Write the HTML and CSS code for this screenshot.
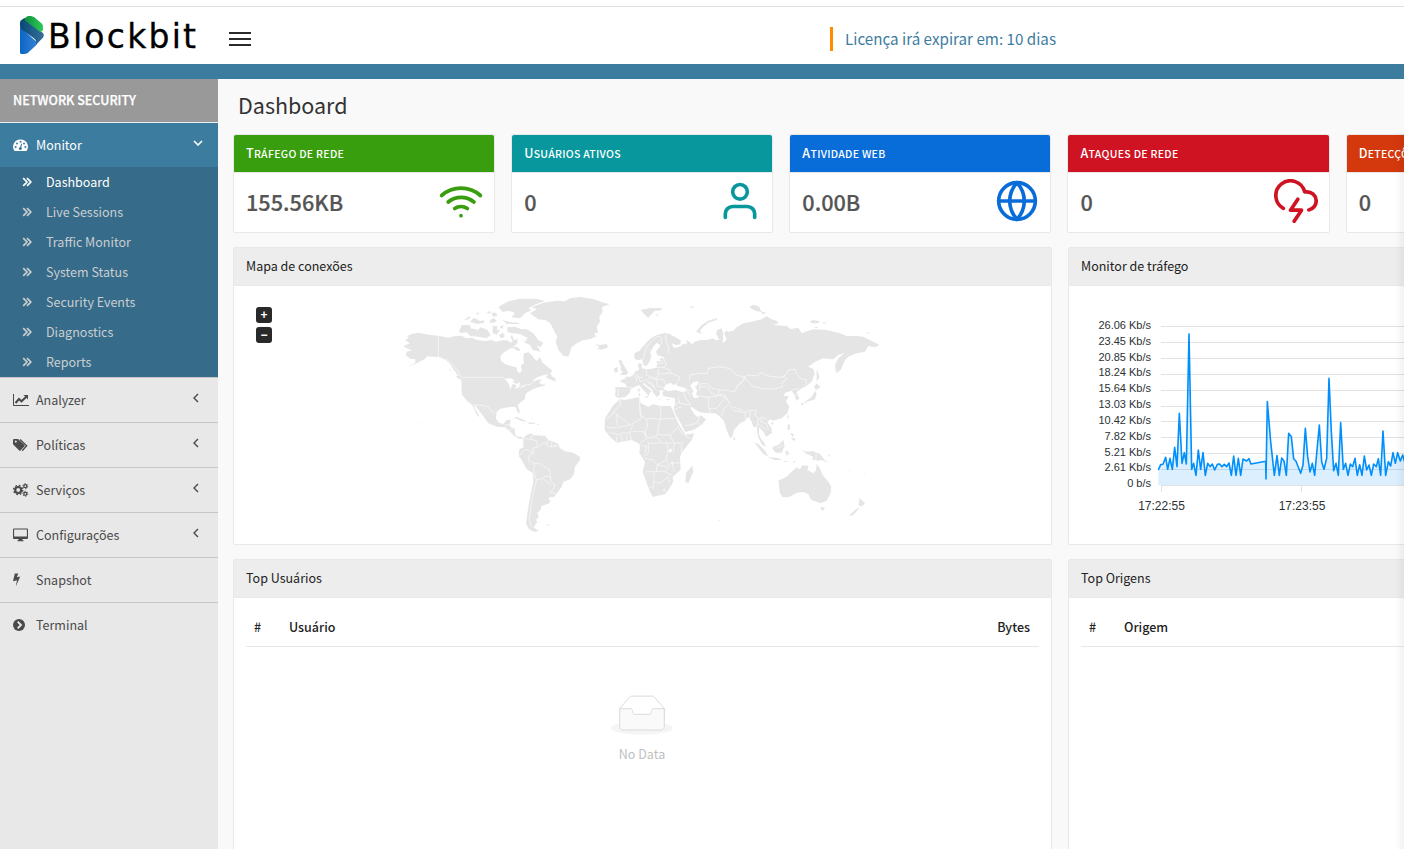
FILE: index.html
```html
<!DOCTYPE html>
<html lang="pt-BR">
<head>
<meta charset="utf-8">
<title>Blockbit</title>
<link rel="stylesheet" href="styles.css">
</head>
<body>
<svg class="defs" width="0" height="0" aria-hidden="true">
  <symbol id="raquo" viewBox="0 0 10 10"><path d="M1.200 1.200L5 5 1.200 8.800M5 1.200L8.800 5 5 8.800" fill="none" stroke="currentColor" stroke-width="1.700"/></symbol>
  <symbol id="left" viewBox="0 0 6 10"><path d="M5 1L1 5l4 4" fill="none" stroke="currentColor" stroke-width="1.400"/></symbol>
</svg>
<header class="top">
  <div class="brand">
    <svg class="mark" viewBox="0 0 72 114">
      <defs>
        <linearGradient id="g1"><stop offset="0" stop-color="#0d8e3c"/><stop offset="1" stop-color="#2fc95a"/></linearGradient>
        <linearGradient id="g2"><stop offset="0" stop-color="#074674"/><stop offset="1" stop-color="#36719c"/></linearGradient>
        <linearGradient id="g3"><stop offset="0" stop-color="#0b66c4"/><stop offset="1" stop-color="#3580d6"/></linearGradient>
      </defs>
      <path fill="url(#g3)" d="M0 32L50 78V86L24 110Q19 114 12 114H4Q0 114 0 109Z"/>
      <path fill="url(#g2)" d="M0 20Q0 14 5 11L14 6 68 50Q75 57 68 66L48 86V76Q47 71 42 67L7 42Q0 37 0 30Z"/>
      <path fill="url(#g1)" d="M13 8L22 1Q27-1 33 0L42 3 66 23Q70 28 69 34V42L62 49 18 16Q14 12 13 8Z"/>
    </svg>
    <span class="word">Blockbit</span>
  </div>
  <div class="burger"><i></i><i></i><i></i></div>
  <div class="notice">Licença irá expirar em: 10 dias</div>
</header>
<div class="strip"></div>
<div class="shell">
  <nav class="side">
    <div class="side-title">NETWORK SECURITY</div>
    <div class="item active">
      <svg class="ico" viewBox="0 0 16 14"><path fill="currentColor" d="M7.500 1.500a7.200 7.200 0 0 0-6.200 11.200q.2.300.6.300h11.200q.4 0 .6-.3A7.200 7.200 0 0 0 7.500 1.500z"/><g fill="#3c7c9f"><circle cx="2.600" cy="9" r="1"/><circle cx="4" cy="5.400" r="1"/><circle cx="7.500" cy="3.800" r="1"/><circle cx="11" cy="5.400" r="1"/><circle cx="12.400" cy="9" r="1"/><circle cx="7.300" cy="10.500" r="1.500"/><path d="M6.800 9.800L8.300 5.500l.8.300-1 4.500z"/></g></svg>
      <span>Monitor</span>
      <svg class="chev down" viewBox="0 0 10 6"><path d="M1 1l4 4 4-4" fill="none" stroke="currentColor" stroke-width="1.600"/></svg>
    </div>
    <ul class="sub">
      <li class="on"><svg><use href="#raquo"/></svg>Dashboard</li>
      <li><svg><use href="#raquo"/></svg>Live Sessions</li>
      <li><svg><use href="#raquo"/></svg>Traffic Monitor</li>
      <li><svg><use href="#raquo"/></svg>System Status</li>
      <li><svg><use href="#raquo"/></svg>Security Events</li>
      <li><svg><use href="#raquo"/></svg>Diagnostics</li>
      <li><svg><use href="#raquo"/></svg>Reports</li>
    </ul>
    <div class="item">
      <svg class="ico" viewBox="0 0 16 14"><path d="M.5 1v11.500H16" fill="none" stroke="currentColor"/><path d="M2.500 10l3.500-4 2.500 2.300L13 4" fill="none" stroke="currentColor" stroke-width="2"/><path d="M10.500 2H15v4.500z" fill="currentColor"/></svg>
      <span>Analyzer</span><svg class="chev"><use href="#left"/></svg>
    </div>
    <div class="item">
      <svg class="ico" viewBox="0 0 16 14"><path fill="currentColor" fill-rule="evenodd" d="M0 2q0-1 1-1h4l6.500 6q.6.600 0 1.200l-4 4.300q-.7.600-1.300 0L0 6.200zm2.800.5a1 1 0 1 0 .01 0z"/><path d="M7 1.500l6.700 6.200-4.500 5" fill="none" stroke="currentColor" stroke-width="1.300"/></svg>
      <span>Políticas</span><svg class="chev"><use href="#left"/></svg>
    </div>
    <div class="item">
      <svg class="ico" viewBox="0 0 16 14"><g fill="none" stroke="currentColor"><circle cx="5.200" cy="7" r="3" stroke-width="2.200"/><circle cx="5.200" cy="7" r="4.600" stroke-width="1.300" stroke-dasharray="1.800 1.813"/><circle cx="12.300" cy="3.200" r="1.500" stroke-width="1.300"/><circle cx="12.300" cy="3.200" r="2.500" stroke-width="1" stroke-dasharray="1.300 1.318"/><circle cx="12.300" cy="10.800" r="1.500" stroke-width="1.300"/><circle cx="12.300" cy="10.800" r="2.500" stroke-width="1" stroke-dasharray="1.300 1.318"/></g></svg>
      <span>Serviços</span><svg class="chev"><use href="#left"/></svg>
    </div>
    <div class="item">
      <svg class="ico" viewBox="0 0 16 14"><path fill="currentColor" fill-rule="evenodd" d="M1 .5h13q1 0 1 1v8.500q0 1-1 1H9.300l.4 1.200h.8v1h-6v-1h.8L5.700 11H1q-1 0-1-1V1.500q0-1 1-1zm.1 1.100v6.900h12.800V1.600z"/></svg>
      <span>Configurações</span><svg class="chev"><use href="#left"/></svg>
    </div>
    <div class="item">
      <svg class="ico" viewBox="0 0 16 14"><path fill="currentColor" d="M1.800.5h3.400L3.900 4.300l3.300-.7L2.800 13.500l1.200-6.200L0 8.200z"/></svg>
      <span>Snapshot</span>
    </div>
    <div class="item">
      <svg class="ico" viewBox="0 0 16 14"><circle cx="6" cy="7" r="6" fill="currentColor"/><path d="M4.700 3.700L8 7l-3.300 3.300" fill="none" stroke="#e8e8e8" stroke-width="1.900"/></svg>
      <span>Terminal</span>
    </div>
  </nav>
  <main class="main">
    <h1>Dashboard</h1>
    <section class="cards">
      <article class="card green"><h2>Tráfego de rede</h2><div class="val"><b>155.56KB</b><svg viewBox="0 0 24 24"><path d="M5 12.550a11 11 0 0 1 14.080 0M1.420 9a16 16 0 0 1 21.160 0M8.530 16.110a6 6 0 0 1 6.950 0M12 20h.01"/></svg></div></article>
      <article class="card teal"><h2>Usuários ativos</h2><div class="val"><b>0</b><svg viewBox="0 0 24 24"><path d="M20 21v-2a4 4 0 0 0-4-4H8a4 4 0 0 0-4 4v2"/><circle cx="12" cy="7" r="4"/></svg></div></article>
      <article class="card blue"><h2>Atividade web</h2><div class="val"><b>0.00B</b><svg viewBox="0 0 24 24"><circle cx="12" cy="12" r="10"/><path d="M2 12h20M12 2a15.300 15.300 0 0 1 4 10 15.300 15.300 0 0 1-4 10 15.300 15.300 0 0 1-4-10 15.300 15.300 0 0 1 4-10z"/></svg></div></article>
      <article class="card red"><h2>Ataques de rede</h2><div class="val"><b>0</b><svg viewBox="0 0 24 24"><path d="M19 16.900A5 5 0 0 0 18 7h-1.260a8 8 0 1 0-11.620 9M13 11l-4 6h6l-4 6"/></svg></div></article>
      <article class="card orange"><h2>Detecções</h2><div class="val"><b>0</b></div></article>
    </section>
    <section class="row">
      <article class="panel map-panel">
        <h3>Mapa de conexões</h3>
        <div class="map-body">
          <div class="zoomers"><span>+</span><span>−</span></div>
          <svg class="map" viewBox="390 290 500 250">
            <g transform="translate(390 290) scale(.33333)">
              <path class="land" d="M40 168L60 160 45 150 57 143 50 138 68 131 85 128 115 134 150 138 175 143 195 138 215 137 228 145 245 143 262 150 285 153 305 150 318 155 340 150 355 152 360 158 368 155 362 140 366 135 372 150 383 148 382 160 368 172 350 182 338 190 331 200 333 212 345 222 365 229 380 232 382 245 390 249 396 240 392 228 402 220 400 205 402 190 415 187 425 195 432 205 440 213 450 202 458 218 475 232 487 243 478 252 462 255 445 260 433 268 430 277 440 270 454 268 448 280 460 284 466 280 463 287 445 292 430 297 420 302 408 310 405 318 405 327 390 338 383 345 388 360 389 371 382 366 378 352 365 350 345 353 330 357 320 365 318 385 326 398 340 402 350 390 363 389 358 404 362 412 374 415 375 432 382 440 396 440 400 446 388 446 372 437 358 422 343 412 320 410 295 400 288 390 275 372 256 347 252 350 263 370 270 382 260 374 247 345 230 332 215 312 215 285 214 268 218 272 205 258 192 240 180 222 168 210 150 202 130 200 112 199 105 206 80 220 53 231 76 218 76 208 60 206 47 195 50 185 65 181 50 175Z"/>
              <path class="land" d="M467 262L480 248 487 260 497 265 496 275 485 270ZM420 70L440 58 425 52 460 38 500 32 525 34 540 25 570 21 610 27 640 38 660 42 635 52 638 65 628 80 630 95 620 110 624 130 612 128 618 140 600 148 580 150 560 160 545 172 535 200 520 197 505 180 497 155 502 140 492 122 480 98 465 90 445 88ZM615 163L630 165 650 162 655 172 635 179 622 176 628 170ZM338 66L325 52 340 42 355 34 390 26 440 26 465 33 440 42 415 55 425 60 405 70 390 85 365 82 375 68 355 62ZM207 125L215 105 240 105 243 115 265 120 270 112 290 118 302 135 290 145 265 140 240 138 230 127 212 129ZM222 90L235 80 243 80 236 88ZM240 95L250 84 262 88 270 94 280 90 284 98 262 102ZM258 72L265 66 266 74ZM288 70L300 62 303 70ZM300 90L312 84 320 92 312 98 300 98ZM308 108L322 108 320 120 330 118 320 135 308 128ZM328 110L340 105 338 118ZM338 90L360 97 388 98 386 102 350 102ZM352 112L375 110 395 118 410 118 430 130 445 150 460 158 452 172 440 165 452 185 428 180 420 165 405 158 400 150 415 145 390 132 365 130 352 125ZM365 172L380 170 392 180 385 184ZM305 68L318 68 322 78 308 80ZM326 136L338 128 345 138 335 146ZM362 388L380 380 402 390 410 395 395 393 375 384ZM414 397L435 398 434 402 416 401ZM400 401L406 401 405 404ZM441 402L447 402 446 404 441 404ZM84 396L89 397 87 400ZM176 236L183 240 182 244ZM196 256L214 262 222 272 205 266Z"/>
              <path class="land" d="M400 446L408 436 425 430 430 436 465 437 475 450 503 460 510 474 525 484 550 488 569 500 570 510 555 530 552 552 540 568 520 575 515 590 500 610 492 622 480 620 475 628 482 632 478 640 455 648 452 660 442 668 446 680 438 690 442 695 430 712 447 724 430 725 415 715 408 700 412 670 417 640 425 600 430 575 429 550 410 538 395 510 386 498 388 478 400 472ZM466 704L478 702 474 707Z"/>
              <path class="border" d="M145 138V202M218 262H335L352 268 375 272M388 294L402 286 425 282 432 268M168 206L185 222 205 246 216 266M250 345L275 346 295 350 305 364 316 370M345 416L350 403 358 405M356 420L372 416M402 446L424 448M425 434L424 448 440 452 442 472 428 474 432 488 405 478 395 490 388 498M442 472L465 458 475 470 505 468M475 450L470 462M485 457L485 470M500 460L492 470M432 488L418 496 415 512 432 520 432 550 440 570 455 566 466 558 482 560 482 575 495 585 490 598 480 606 500 612M432 520L450 520 462 530 480 540 480 560M460 566L470 575 484 588M440 570L432 600 424 640 418 690 424 712"/>
              <path class="water" d="M345 268L360 264 372 270 368 276 380 282 390 276 388 290 375 298 380 285 368 282 360 300 358 285 352 276ZM392 290L405 284 402 290ZM400 150L410 145 408 155ZM404 282L418 280Z"/>
            </g>
            <g transform="translate(600 290) scale(.33333)">
              <path class="land" d="M103 190L118 182 135 162 152 145 172 134 195 129 212 133 208 150 215 175 205 195 192 202 172 196 168 185 178 172 182 165 170 158 160 170 151 187 154 200 148 215 140 228 130 225 125 208 112 211 103 205Z"/>
              <path class="land" d="M205 132L225 140 243 152 240 163 228 165 215 160 222 174 240 170 248 163 262 160 258 150 268 155 276 163 285 155 302 150 320 150 340 145 345 150 358 150 348 130 352 120 365 115 370 130 368 160 380 150 373 130 378 122 388 125 400 122 410 112 430 100 455 95 485 88 500 78 515 88 530 92 535 100 520 105 560 108 572 117 595 113 605 130 640 118 680 120 720 130 740 138 770 138 790 140 838 164 828 172 805 168 795 185 770 190 745 200 735 210 722 240 708 250 705 225 715 205 735 188 715 195 700 208 670 205 645 215 625 230 640 237 644 252 635 275 620 287 606 294 590 306 598 325 590 333 583 315 575 302 555 308 552 318 566 318 558 335 568 350 562 370 545 385 520 392 510 388 502 397 515 415 515 430 498 440 490 425 478 412 476 430 482 445 493 458 497 470 486 464 476 445 472 430 470 410 460 412 455 395 445 382 435 392 420 400 402 420 398 438 390 445 378 415 372 392 358 378 345 370 325 370 300 367 285 358 274 350 272 355 285 375 292 380 302 376 318 388 305 405 280 420 255 426 245 405 228 375 220 355 225 345 225 325 210 322 190 318 187 308 192 302 178 300 180 312 172 322 162 312 155 298 145 290 132 279 128 282 142 293 155 304 148 310 145 318 138 308 128 298 118 285 105 290 92 297 88 310 75 322 55 324 45 318 47 300 45 292 60 291 80 292 77 282 62 275 62 270 75 266 78 260 92 260 98 255 108 243 118 240 113 225 120 218 126 224 125 235 140 238 155 236 168 233 172 222 168 215 180 212 178 206 192 204 198 190Z"/>
              <path class="land" d="M55 212L65 210 68 220 80 240 85 248 78 255 60 255 68 245 62 240 62 228ZM42 235L52 230 54 245 44 248ZM62 328L75 330 118 322 122 340 145 350 160 342 180 348 212 348 220 365 235 400 250 425 258 434 283 430 275 450 245 488 240 500 242 540 218 560 220 575 205 600 195 613 170 618 158 621 150 605 140 580 128 545 135 515 118 490 120 465 112 458 95 450 50 458 30 440 14 420 15 385 40 345 60 328ZM277 527L280 545 265 580 256 575 258 548ZM400 438L407 448 402 453ZM122 60L140 56 150 54 188 55 180 62 165 62 155 72 145 83 132 72ZM165 74L175 73 172 78ZM268 50L285 48 275 54ZM288 125L305 105 325 92 352 84 350 90 325 98 310 110 300 122 306 132ZM448 52L460 44 478 50 484 66 465 62ZM482 64L500 68 488 73ZM630 94L640 90 660 94 655 100 635 100ZM665 97L682 98 672 101ZM640 112L655 110 650 115ZM798 128L810 126 805 131ZM650 238L655 250 658 262 650 276ZM642 290L650 280 662 292 648 300ZM645 302L650 312 645 328 632 332 612 336 625 328 635 320ZM602 340L612 338 606 348ZM612 338L624 335 618 340ZM562 375L568 378 562 387ZM512 400L522 396 518 404ZM564 402L570 406 570 418 562 420ZM570 428L582 432 578 442ZM572 445L586 444 584 454ZM462 456L475 462 495 482 505 500 490 492ZM502 502L530 503 548 510 525 510ZM518 470L535 465 550 450 554 468 545 488 528 488 518 478ZM556 484L575 476 562 482 570 495 562 492 560 502ZM548 512L568 514 555 516ZM578 516L590 510 580 520ZM605 480L620 485 640 484 660 492 672 508 684 518 665 510 650 512 635 508 640 500 620 492ZM685 496L692 492 688 500ZM535 572L560 560 575 545 590 532 600 538 608 526 625 528 622 540 640 550 648 540 650 522 660 535 668 555 685 575 694 590 692 610 680 632 662 640 645 634 632 628 625 612 610 606 590 608 570 620 548 622 540 610ZM660 652L675 652 668 664ZM778 624L795 640 785 650 776 645ZM748 676L768 658 780 652 770 664 756 678ZM740 562L748 568ZM746 538L752 540 748 542ZM792 546L795 550 792 550ZM355 690L362 691 358 693ZM114 296L119 296 118 306 114 304ZM115 308L122 312 118 320ZM132 320L145 319 142 324ZM175 328L186 330 178 331ZM198 328L210 326 205 331ZM838 180L845 182Z"/>
              <path class="water" d="M190 298L196 285 212 278 220 286 232 278 228 286 245 292 262 300 248 306 225 300 205 304ZM270 288L280 276 296 274 294 284 285 290 292 302 288 312 298 322 282 324 276 312 280 302ZM206 480L216 476 214 487 206 487Z"/>
              <path class="border" d="M127 220L130 200 140 170 160 148 175 138 184 142 185 162M196 134L200 160 206 172 204 192M190 204L200 225 190 232 210 240 212 250 240 260 235 275M168 218L190 220M168 208L190 214M168 232L190 232M178 236L172 250 190 252 212 248M138 238L140 255 155 262 172 264 176 252M104 250L115 258 120 275M78 290L100 294M50 298L55 300 54 320M98 255L110 262 108 278M120 275L140 270 150 262M150 264L160 268 175 268M140 275L158 280 160 292M170 270L172 290 192 292M175 268L190 268 198 285M160 292L172 302M145 278L165 290M112 262L130 262M244 290L264 298 270 305M255 302L268 310 270 320M268 270L270 255 300 250 322 250 325 235 360 230 390 236 410 255 435 262 430 272 410 290 405 305 375 300 360 300 335 295 320 280 300 282 298 300M430 262L445 255 475 258 480 248 505 258 540 262 555 260 560 268 545 278 548 290 520 298 490 296 460 290 445 275ZM545 262L560 252 565 240 585 238 590 250 600 265 620 270 618 285M430 272L410 290M300 290L320 290 335 310 352 318 370 312M298 318L325 322 352 318M360 300L352 312 375 322 385 330M325 322L325 345 332 370M325 355L350 355 362 340 375 325M365 378L372 355 388 340 382 330 375 315M388 345L402 362 435 368 450 362 470 360 465 375 475 385 485 382 500 388M400 350L430 362M435 368L436 385 448 388M452 365L448 388M475 385L472 410M484 384L482 395 500 402 505 420M476 402L498 420M575 300L598 295M585 316L596 314M250 305L255 320 272 345M235 322L240 340 270 345M225 345L240 335M222 358L245 350M255 408L290 400 300 380M295 398L302 408M290 380L300 378M60 330L62 345 40 365 35 375 18 388M40 365L90 405 125 385 120 350M118 325L120 375 140 388 145 385 182 388 182 348M182 386H226M182 388L176 405 172 430 182 435 210 435 235 410M140 388L142 410 135 425 138 440M90 405L55 412 50 400 52 372M20 412L50 414M60 430L90 428 98 405M30 428L60 435M50 440V456M66 436V455M80 432V452M90 428L94 450M98 425L132 425 140 445 120 460M140 445L165 440 175 432M145 460L200 458 215 460M165 440L185 455M210 435L222 460 250 458M235 410L245 430 270 445M222 460L220 485M245 462V485M122 468H140L135 490M145 460L145 490 130 500M135 505L160 510 172 525 168 545 135 546M200 458L205 475 198 510 172 525M172 525L200 530 220 515M198 510L205 518M216 515L222 545M168 545L195 545 210 528M162 548V570L160 595 148 590M162 575L180 580 205 560M195 545L215 555M205 560L208 580M240 518L215 520M192 596L198 600 192 604 188 600ZM648 486V512M530 475L550 466"/>
            </g>
          </svg>
        </div>
      </article>
      <article class="panel chart-panel">
        <h3>Monitor de tráfego</h3>
        <svg class="chart" viewBox="1069 286 540 258">
          <path class="grid" d="M1161 326.500h450M1161 342.500h450M1161 358.500h450M1161 374.500h450M1161 390.500h450M1161 406.500h450M1161 421.500h450M1161 437.500h450M1161 453.500h450M1161 469.500h450M1161 485.500h450M1161.500 485v7M1301.500 485v7"/>
          <g class="ylab">
            <text x="1151" y="329">26.06 Kb/s</text><text x="1151" y="345">23.45 Kb/s</text><text x="1151" y="361">20.85 Kb/s</text><text x="1151" y="376">18.24 Kb/s</text><text x="1151" y="392">15.64 Kb/s</text><text x="1151" y="408">13.03 Kb/s</text><text x="1151" y="424">10.42 Kb/s</text><text x="1151" y="440">7.82 Kb/s</text><text x="1151" y="456">5.21 Kb/s</text><text x="1151" y="471">2.61 Kb/s</text><text x="1151" y="487">0 b/s</text>
          </g>
          <g class="xlab"><text x="1161.500" y="510">17:22:55</text><text x="1302" y="510">17:23:55</text></g>
          <g transform="translate(1065 310) scale(.33333)">
            <path class="area" d="M280 525V480L287 464 294 463 302 442 308 478 315 445 322 478 329 412 336 470 343 310 351 460 358 428 364 462 372 72 380 478 386 460 393 496 400 420 407 478 414 428 421 496 428 460 435 470 442 462 449 480 457 463 464 462 471 470 478 463 485 470 492 459 499 496 506 438 513 496 520 445 527 496 534 447 545 453 552 446 558 462 602 454 603 507 607 275 617 395 628 496 636 437 643 496 650 444 657 453 664 496 671 370 679 380 686 446 693 454 707 490 714 465 721 355 728 440 735 486 742 460 749 496 763 345 770 455 777 478 785 445 792 205 799 365 806 482 813 460 820 496 827 338 835 478 842 460 849 496 856 462 863 470 870 445 877 496 884 464 891 496 898 438 905 480 912 465 919 496 926 462 934 470 940 446 947 496 954 363 962 496 970 455 977 468 984 428 991 460 998 428 1006 453 1013 435 1020 460V525Z"/>
            <path class="line" d="M280 480L287 464 294 463 302 442 308 478 315 445 322 478 329 412 336 470 343 310 351 460 358 428 364 462 372 72 380 478 386 460 393 496 400 420 407 478 414 428 421 496 428 460 435 470 442 462 449 480 457 463 464 462 471 470 478 463 485 470 492 459 499 496 506 438 513 496 520 445 527 496 534 447 545 453 552 446 558 462 602 454 603 507 607 275 617 395 628 496 636 437 643 496 650 444 657 453 664 496 671 370 679 380 686 446 693 454 707 490 714 465 721 355 728 440 735 486 742 460 749 496 763 345 770 455 777 478 785 445 792 205 799 365 806 482 813 460 820 496 827 338 835 478 842 460 849 496 856 462 863 470 870 445 877 496 884 464 891 496 898 438 905 480 912 465 919 496 926 462 934 470 940 446 947 496 954 363 962 496 970 455 977 468 984 428 991 460 998 428 1006 453 1013 435 1020 460"/>
          </g>
        </svg>
      </article>
    </section>
    <section class="row">
      <article class="panel users">
        <h3>Top Usuários</h3>
        <div class="thead"><span class="n">#</span><span>Usuário</span><span class="end">Bytes</span></div>
        <div class="empty">
          <svg viewBox="0 0 64 41"><g transform="translate(0 1)" fill="none" fill-rule="evenodd"><ellipse fill="#f5f5f5" cx="32" cy="33" rx="32" ry="7"/><g stroke="#d9d9d9"><path fill="#fff" d="M55 12.760L44.854 1.258C44.367.474 43.656 0 42.907 0H21.093c-.749 0-1.460.474-1.947 1.257L9 12.761V22h46v-9.240z"/><path d="M41.613 15.931c0-1.605.994-2.930 2.227-2.931H55v18.137C55 33.260 53.680 35 52.050 35h-40.100C10.320 35 9 33.259 9 31.137V13h11.160c1.233 0 2.227 1.323 2.227 2.928v.022c0 1.605 1.005 2.901 2.237 2.901h14.752c1.232 0 2.237-1.308 2.237-2.913v-.007z" fill="#fafafa"/></g></g></svg>
          <p>No Data</p>
        </div>
      </article>
      <article class="panel origins">
        <h3>Top Origens</h3>
        <div class="thead"><span class="n">#</span><span>Origem</span></div>
      </article>
    </section>
    <div class="edge"></div>
  </main>
</div>
</body>
</html>
```
FILE: styles.css
```css
* { box-sizing: border-box; }
html, body { height: 100%; overflow: hidden; }
body {
  margin: 0;
  background: #fff;
  color: #222;
  font: 12.53px/20px "Noto Sans CJK SC", "Noto Sans", sans-serif;
  display: flex;
  flex-direction: column;
}
.defs { position: absolute; }
.top { margin-top: 6px; height: 58px; flex: none; border-top: 1px solid #e0e0e0; display: flex; align-items: flex-start; }
.brand { display: flex; width: 229px; padding: 9px 0 0 20px; }
.mark { width: 24px; height: 38px; flex: none; }
.word { font: 33px/42px "DejaVu Sans", sans-serif; color: #000; margin-left: 4px; letter-spacing: 2.25px; white-space: nowrap; -webkit-text-stroke: .3px #000; }
.burger { width: 22px; margin-top: 25px; display: grid; gap: 4px; }
.burger i { height: 2px; background: #2b2b2b; }
.notice { margin: 20px 0 0 579px; height: 24px; border-left: 3px solid #ff8c00; padding-left: 12px; font-size: 15.2px; line-height: 22px; color: #3c7c9f; white-space: nowrap; }
.strip { height: 15px; flex: none; background: #3c7c9f; }
.shell { display: flex; flex: 1; min-height: 0; }
.side { width: 218px; flex: none; background: #e8e8e8; color: #4a4a4a; }
.side-title { height: 44px; padding-left: 13px; line-height: 41px; background: #999; color: #fff; font-weight: 500; -webkit-text-stroke: .25px #fff; border-bottom: 1px solid #eee; }
.item { height: 45px; display: flex; align-items: center; padding-left: 13px; border-top: 1px solid #c9c4c7; }
.item span { margin-left: 7px; }
.item.active { height: 44px; border: 0; background: #3c7c9f; color: #fff; }
.ico { width: 16px; height: 14px; }
.chev { width: 6px; height: 10px; margin: -4px 19px 0 auto; }
.chev.down { width: 10px; height: 6px; margin: -5px 15px 0 auto; }
.sub { margin: 0; padding: 0; list-style: none; background: #366b89; color: #c9ced1; }
.sub li { height: 30px; line-height: 30px; display: flex; align-items: center; padding-left: 22px; }
.sub li svg { width: 10px; height: 10px; margin-right: 14px; }
.sub li.on { color: #fff; }
.main { flex: 1; min-width: 0; position: relative; overflow: hidden; background: #f9f9f9; padding-left: 15px; }
h1 { margin: 0; padding: 11px 0 0 5px; height: 55px; font-size: 21.500px; line-height: 30px; font-weight: 400; color: #333; }
.cards { display: flex; gap: 16px; width: 1374.800px; margin-bottom: 14px; }
.card { flex: 1 1 0; height: 99px; background: #fff; border: 1px solid #e8e8e8; border-radius: 2px; }
.card h2 { margin: 0; height: 37px; padding-left: 12px; border-radius: 2px 2px 0 0; line-height: 35px; font-size: 10.500px; letter-spacing: .29px; font-weight: 500; text-transform: uppercase; color: #fff; white-space: nowrap; }
.card h2::first-letter { font-size: 12.550px; }
.val { display: flex; justify-content: space-between; align-items: flex-start; height: 60px; padding: 6px 11px 0 12px; border-top: 1px solid #e8e8e8; }
.val b { font-size: 21.700px; line-height: 45px; font-weight: 500; color: #555; -webkit-text-stroke: .2px #555; }
.val svg { width: 44px; height: 44px; fill: none; stroke: currentColor; stroke-width: 2; stroke-linecap: round; stroke-linejoin: round; }
.green { color: #389e0d; } .green h2 { background: #389e0d; }
.teal { color: #08979c; } .teal h2 { background: #08979c; }
.teal .val { padding-right: 10px; }
.blue { color: #096dd9; } .blue h2 { background: #096dd9; }
.red { color: #cf1322; } .red h2 { background: #cf1322; }
.orange { color: #d4380d; } .orange h2 { background: #d4380d; }
.row { display: flex; gap: 16px; width: 1375px; margin-bottom: 14px; }
.panel { width: 819px; flex: none; height: 298px; background: #fff; border: 1px solid #e8e8e8; border-radius: 2px; }
.chart-panel, .origins { width: 540px; }
.users, .origins { height: 320px; }
.panel h3 { margin: 0; height: 38px; padding-left: 12px; line-height: 35px; font-size: 12.500px; font-weight: 400; background: #ededed; border-bottom: 1px solid #e8e8e8; }
.map-body { display: flex; align-items: flex-start; height: 258px; }
.zoomers { display: grid; gap: 4px; margin: 21px 0 0 22px; }
.zoomers span { width: 16px; height: 16px; border-radius: 3px; background: #292929; color: #fff; font: bold 12px/16px "Liberation Sans", Arial, sans-serif; text-align: center; }
.map { width: 500px; height: 250px; margin: 4px 0 0 118px; }
.land { fill: #e5e5e5; }
.water { fill: #fff; }
.border { fill: none; stroke: #fff; stroke-width: 1.700; }
.chart { display: block; width: 540px; height: 258px; }
.grid { stroke: #e2e2e2; stroke-width: 1; fill: none; }
.ylab, .xlab { font-family: "Liberation Sans", Arial, sans-serif; fill: #2c3235; font-size: 11px; text-anchor: end; }
.xlab { font-size: 12px; text-anchor: middle; }
.area { fill: #008ffb; fill-opacity: .14; }
.line { fill: none; stroke: #008ffb; stroke-width: 4.800; stroke-linejoin: round; }
.thead { display: flex; margin: 10px 12px 0; height: 39px; padding: 0 9px 0 8px; line-height: 37px; border-bottom: 1px solid #e8e8e8; font-weight: 500; }
.thead .n { width: 35px; }
.thead .end { margin-left: auto; }
.empty { display: flex; flex-direction: column; align-items: center; padding: 48px 1px 0 0; color: #bfbfbf; }
.empty svg { width: 62px; height: 40px; }
.empty p { margin: 9px 0 0; }
.edge { position: absolute; right: 0; top: 54px; bottom: 0; width: 9px; background: linear-gradient(90deg, rgba(0,0,0,0), rgba(0,0,0,.05)); }
```
